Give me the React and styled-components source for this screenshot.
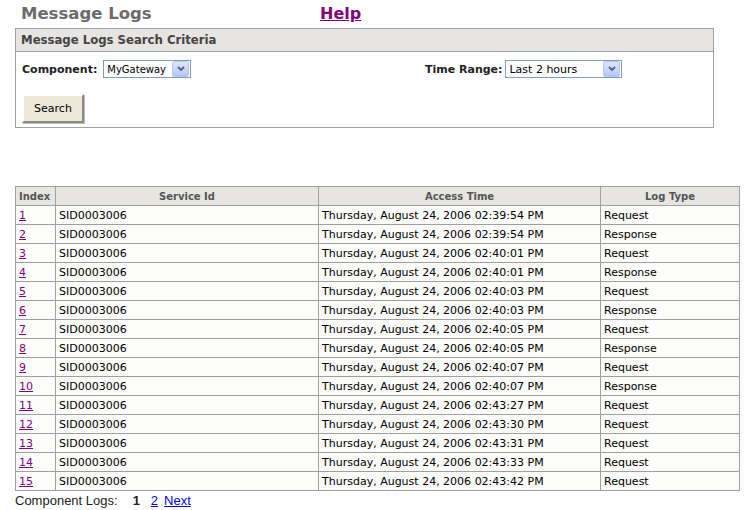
import React from "react";
import styled, { createGlobalStyle } from "styled-components";

const GlobalStyle = createGlobalStyle`
  body {
    margin: 0;
    background: #fff;
    font-family: "DejaVu Sans", Verdana, sans-serif;
    font-size: 11px;
    color: #000;
  }
`;

const Page = styled.div`
  padding: 4px 12px 0 15px;
`;

const TitleBar = styled.div`
  display: flex;
  align-items: baseline;
  height: 24px;
  padding-left: 6px;
`;

const Title = styled.h1`
  margin: 0;
  width: 299px;
  font-size: 16.5px;
  font-weight: bold;
  color: #6b6b6b;
`;

const HelpLink = styled.a`
  font-size: 16px;
  font-weight: bold;
  color: #800080;
  text-decoration: underline;
`;

const Panel = styled.div`
  width: 697px;
  border: 1px solid #a0a0a0;
`;

const PanelHeader = styled.div`
  height: 22px;
  line-height: 22px;
  padding-left: 5px;
  background: #e6e5e1;
  border-bottom: 1px solid #a0a0a0;
  font-size: 11.7px;
  font-weight: bold;
  color: #444;
`;

const PanelBody = styled.div`
  padding: 8px 6px 4px 6px;
`;

const FieldRow = styled.div`
  display: grid;
  grid-template-columns: 403px auto;
  align-items: center;
  height: 18px;
`;

const Field = styled.div`
  display: flex;
  align-items: center;
  gap: ${(p) => p.$gap}px;
`;

const Label = styled.span`
  font-weight: bold;
  color: #222;
`;

const SelectBox = styled.div`
  display: flex;
  align-items: center;
  justify-content: space-between;
  box-sizing: border-box;
  width: ${(p) => p.$width}px;
  height: 18px;
  border: 1px solid #7f9db9;
  background: #fff;
  padding: 0 1px 0 3px;
  font-size: ${(p) => p.$size}px;
`;

const ArrowBox = styled.span`
  display: flex;
  align-items: center;
  justify-content: center;
  width: 15px;
  height: 14px;
  border: 1px solid #b8c9ef;
  border-radius: 2px;
  background: linear-gradient(#dbe6fd, #b4c8f6);
`;

const Arrow = () => (
  <svg width="8" height="6" viewBox="0 0 8 6">
    <path d="M1 1 L4 4 L7 1" fill="none" stroke="#4d6185" strokeWidth="1.8" />
  </svg>
);

const Select = ({ width, size, children }) => (
  <SelectBox $width={width} $size={size}>
    <span>{children}</span>
    <ArrowBox>
      <Arrow />
    </ArrowBox>
  </SelectBox>
);

const SearchButton = styled.button`
  margin-top: 16px;
  width: 62px;
  height: 29px;
  font-family: "DejaVu Sans", Verdana, sans-serif;
  font-size: 11px;
  color: #000;
  background: #ece9d8;
  border: 2px solid;
  border-color: #fff #8a8a80 #8a8a80 #fff;
  box-shadow: 1px 1px 0 #bbb;
  padding: 0;
`;

const LogTable = styled.table`
  margin-top: 58px;
  width: 724px;
  border-collapse: collapse;
  table-layout: fixed;
`;

const HeadCell = styled.th`
  height: 18px;
  padding: 0 3px;
  background: #e6e5e1;
  border: 1px solid #a0a0a0;
  font-size: 10px;
  font-weight: bold;
  color: #555;
  text-align: ${(p) => (p.$left ? "left" : "center")};
`;

const Cell = styled.td`
  height: 18px;
  padding: 0 3px;
  background: #fcfcfa;
  border: 1px solid #a0a0a0;
  white-space: nowrap;
`;

const IndexLink = styled.a`
  color: #800080;
  text-decoration: underline;
`;

const Pager = styled.div`
  display: flex;
  align-items: center;
  gap: 6px;
  height: 18px;
  font-family: "Liberation Sans", Arial, sans-serif;
  font-size: 13px;
  color: #222;
`;

const PagerLabel = styled.span`
  margin-right: 9px;
`;

const Current = styled.b`
  margin-right: 5px;
`;

const PageLink = styled.a`
  color: #0000ee;
  text-decoration: underline;
`;

const times = [
  ["02:39:54", "Request"],
  ["02:39:54", "Response"],
  ["02:40:01", "Request"],
  ["02:40:01", "Response"],
  ["02:40:03", "Request"],
  ["02:40:03", "Response"],
  ["02:40:05", "Request"],
  ["02:40:05", "Response"],
  ["02:40:07", "Request"],
  ["02:40:07", "Response"],
  ["02:43:27", "Request"],
  ["02:43:30", "Request"],
  ["02:43:31", "Request"],
  ["02:43:33", "Request"],
  ["02:43:42", "Request"],
];

export default function App() {
  return (
    <Page>
      <GlobalStyle />
      <TitleBar>
        <Title>Message Logs</Title>
        <HelpLink href="#">Help</HelpLink>
      </TitleBar>
      <Panel>
        <PanelHeader>Message Logs Search Criteria</PanelHeader>
        <PanelBody>
          <FieldRow>
            <Field $gap={6}>
              <Label>Component:</Label>
              <Select width={88} size={10}>
                MyGateway
              </Select>
            </Field>
            <Field $gap={3}>
              <Label>Time Range:</Label>
              <Select width={117} size={11}>
                Last 2 hours
              </Select>
            </Field>
          </FieldRow>
          <SearchButton>Search</SearchButton>
        </PanelBody>
      </Panel>
      <LogTable>
        <colgroup>
          <col style={{ width: 40 }} />
          <col style={{ width: 263 }} />
          <col style={{ width: 282 }} />
          <col style={{ width: 139 }} />
        </colgroup>
        <thead>
          <tr>
            <HeadCell $left>Index</HeadCell>
            <HeadCell>Service Id</HeadCell>
            <HeadCell>Access Time</HeadCell>
            <HeadCell>Log Type</HeadCell>
          </tr>
        </thead>
        <tbody>
          {times.map(([t, type], i) => (
            <tr key={i}>
              <Cell>
                <IndexLink href="#">{i + 1}</IndexLink>
              </Cell>
              <Cell>SID0003006</Cell>
              <Cell>Thursday, August 24, 2006 {t} PM</Cell>
              <Cell>{type}</Cell>
            </tr>
          ))}
        </tbody>
      </LogTable>
      <Pager>
        <PagerLabel>Component Logs:</PagerLabel>
        <Current>1</Current>
        <PageLink href="#">2</PageLink>
        <PageLink href="#">Next</PageLink>
      </Pager>
    </Page>
  );
}
